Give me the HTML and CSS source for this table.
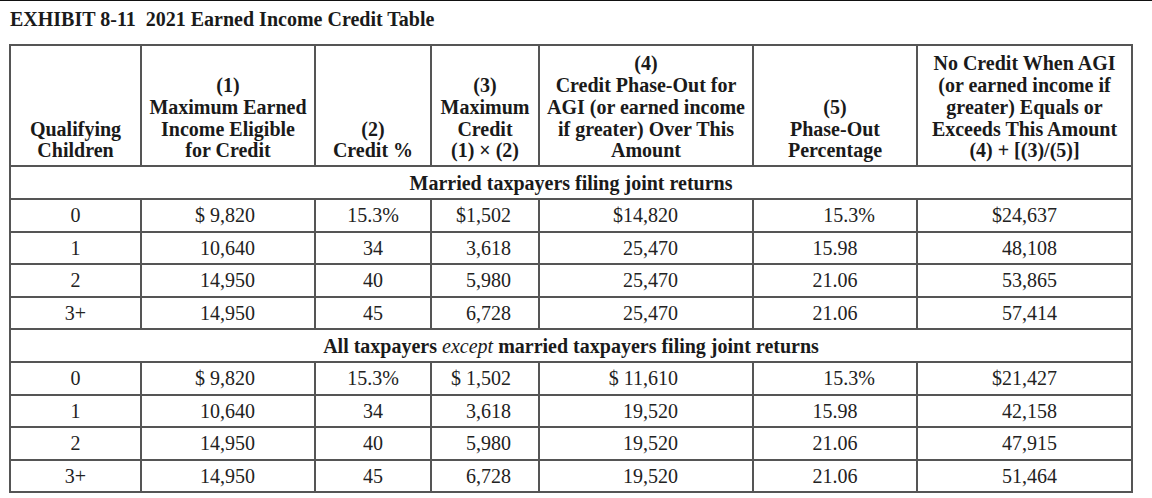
FILE: index.html
```html
<!DOCTYPE html>
<html>
<head>
<meta charset="utf-8">
<link rel="stylesheet" href="styles.css">
</head>
<body>
<div class="page">
  <h1 class="title">EXHIBIT 8-11&nbsp; 2021 Earned Income Credit Table</h1>
  <table class="eic">
    <colgroup>
      <col class="c1"><col class="c2"><col class="c3"><col class="c4"><col class="c5"><col class="c6"><col class="c7">
    </colgroup>
    <thead>
      <tr class="head">
        <th>Qualifying<br>Children</th>
        <th>(1)<br>Maximum Earned<br>Income Eligible<br>for Credit</th>
        <th>(2)<br>Credit %</th>
        <th>(3)<br>Maximum<br>Credit<br>(1) × (2)</th>
        <th>(4)<br>Credit Phase-Out for<br>AGI (or earned income<br>if greater) Over This<br>Amount</th>
        <th>(5)<br>Phase-Out<br>Percentage</th>
        <th>No Credit When AGI<br>(or earned income if<br>greater) Equals or<br>Exceeds This Amount<br>(4) + [(3)/(5)]</th>
      </tr>
    </thead>
    <tbody>
      <tr class="section"><td colspan="7">Married taxpayers filing joint returns</td></tr>
      <tr class="row"><td class="ctr">0</td><td class="n2">$ 9,820</td><td class="ctr">15.3%</td><td class="n4">$1,502</td><td class="n5">$14,820</td><td class="ctr pct">15.3%</td><td class="n7">$24,637</td></tr>
      <tr class="row"><td class="ctr">1</td><td class="n2">10,640</td><td class="ctr">34</td><td class="n4">3,618</td><td class="n5">25,470</td><td class="ctr">15.98</td><td class="n7">48,108</td></tr>
      <tr class="row"><td class="ctr">2</td><td class="n2">14,950</td><td class="ctr">40</td><td class="n4">5,980</td><td class="n5">25,470</td><td class="ctr">21.06</td><td class="n7">53,865</td></tr>
      <tr class="row"><td class="ctr">3+</td><td class="n2">14,950</td><td class="ctr">45</td><td class="n4">6,728</td><td class="n5">25,470</td><td class="ctr">21.06</td><td class="n7">57,414</td></tr>
      <tr class="section"><td colspan="7">All taxpayers <em>except</em> married taxpayers filing joint returns</td></tr>
      <tr class="row"><td class="ctr">0</td><td class="n2">$ 9,820</td><td class="ctr">15.3%</td><td class="n4">$ 1,502</td><td class="n5">$ 11,610</td><td class="ctr pct">15.3%</td><td class="n7">$21,427</td></tr>
      <tr class="row"><td class="ctr">1</td><td class="n2">10,640</td><td class="ctr">34</td><td class="n4">3,618</td><td class="n5">19,520</td><td class="ctr">15.98</td><td class="n7">42,158</td></tr>
      <tr class="row"><td class="ctr">2</td><td class="n2">14,950</td><td class="ctr">40</td><td class="n4">5,980</td><td class="n5">19,520</td><td class="ctr">21.06</td><td class="n7">47,915</td></tr>
      <tr class="row"><td class="ctr">3+</td><td class="n2">14,950</td><td class="ctr">45</td><td class="n4">6,728</td><td class="n5">19,520</td><td class="ctr">21.06</td><td class="n7">51,464</td></tr>
    </tbody>
  </table>
</div>
</body>
</html>
```

FILE: styles.css
```css
html, body {
  margin: 0;
  padding: 0;
  background: #ffffff;
}

.page {
  border-top: 1px solid #111111;
  padding: 7px 0 0 9px;
  font-family: "Liberation Serif", "Times New Roman", serif;
  color: #1a1a1a;
}

.title {
  margin: 0 0 14px 1px;
  font-size: 20px;
  line-height: 22px;
  font-weight: bold;
}

.eic {
  border-collapse: collapse;
  border: 2px solid #555555;
  font-size: 20px;
  table-layout: fixed;
  width: 1124px;
}

.c1 { width: 131px; }
.c2 { width: 174px; }
.c3 { width: 116px; }
.c4 { width: 108px; }
.c5 { width: 214px; }
.c6 { width: 164px; }
.c7 { width: 215px; }

.eic th,
.eic td {
  border: 2px solid #555555;
  padding: 0;
}

.eic .head th {
  height: 121px;
  vertical-align: bottom;
  text-align: center;
  font-weight: bold;
  line-height: 21.7px;
  padding-bottom: 3px;
  box-sizing: border-box;
}

.eic .section td {
  height: 31px;
  text-align: center;
  font-weight: bold;
  line-height: 22px;
}

.section em {
  font-weight: normal;
  font-style: italic;
}

.eic .row td {
  height: 30.5px;
  line-height: 22px;
  color: #222222;
}

.eic .ctr { text-align: center; }
.eic .pct { padding-left: 28px; }
.eic .n2 { text-align: right; padding-right: 59px; }
.eic .n4 { text-align: right; padding-right: 27px; }
.eic .n5 { text-align: right; padding-right: 74px; }
.eic .n7 { text-align: right; padding-right: 74px; }
```
